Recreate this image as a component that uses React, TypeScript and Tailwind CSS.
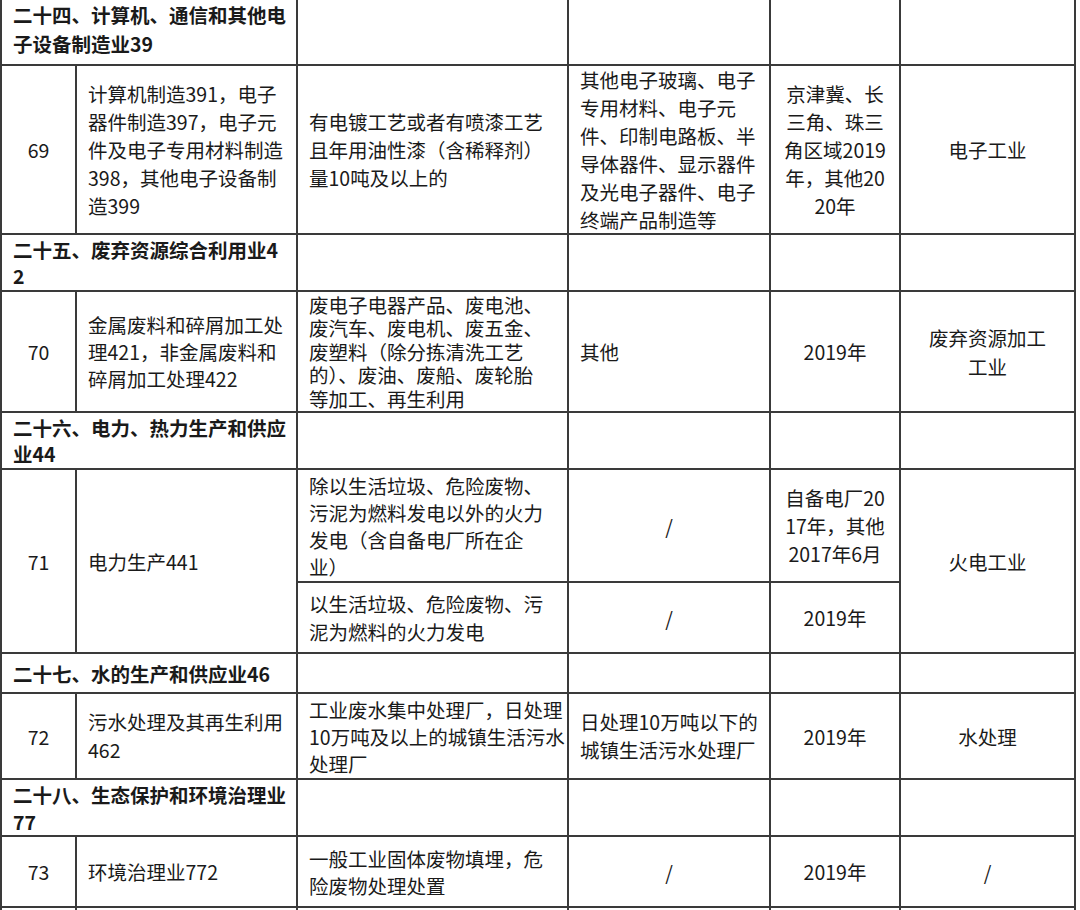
import type { ReactNode } from "react"

type CellProps = {
  lines?: ReactNode[]
  center?: boolean
  lh?: string
  bold?: boolean
  span?: string
}

function Cell({ lines = [], center, lh = "leading-[27px]", bold, span = "" }: CellProps) {
  return (
    <div
      className={`bg-white flex flex-col justify-center ${center ? "items-center text-center" : "pl-[11px]"} ${lh} ${bold ? "font-bold pl-[10px]" : ""} ${span}`}
    >
      {lines.map((l, i) => (
        <div key={i} className="whitespace-nowrap">
          {l}
        </div>
      ))}
    </div>
  )
}

function Empty() {
  return <div className="bg-white" />
}

function Section({ lines, lh }: { lines: string[]; lh: string }) {
  return (
    <>
      <Cell lines={lines} bold lh={lh} span="col-span-2" />
      <Empty />
      <Empty />
      <Empty />
      <Empty />
    </>
  )
}

export default function App() {
  return (
    <div className="bg-white min-h-screen overflow-hidden font-['Noto_Sans_CJK_SC','Noto_Sans_CJK_JP',sans-serif] text-[19.5px] text-[#1a1a1a]">
      <div className="-mt-[9px] w-[1076px] grid gap-[2px] p-[2px] bg-[#3a3a3a] grid-cols-[73px_219px_269px_200px_128px_173px] grid-rows-[71px_167px_55px_119px_55px_111px_69px_38px_84px_55px_69px_40px]">
        <Section lines={["二十四、计算机、通信和其他电", "子设备制造业39"]} lh="leading-[29px]" />

        <Cell lines={["69"]} center />
        <Cell
          lh="leading-[28px]"
          lines={["计算机制造391，电子", "器件制造397，电子元", "件及电子专用材料制造", "398，其他电子设备制", "造399"]}
        />
        <Cell lh="leading-[28px]" lines={["有电镀工艺或者有喷漆工艺", "且年用油性漆（含稀释剂）", "量10吨及以上的"]} />
        <Cell
          lh="leading-[28px]"
          lines={["其他电子玻璃、电子", "专用材料、电子元", "件、印制电路板、半", "导体器件、显示器件", "及光电子器件、电子", "终端产品制造等"]}
        />
        <Cell center lh="leading-[28px]" lines={["京津冀、长", "三角、珠三", "角区域2019", "年，其他20", "20年"]} />
        <Cell center lines={["电子工业"]} />

        <Section lines={["二十五、废弃资源综合利用业4", "2"]} lh="leading-[26px]" />

        <Cell lines={["70"]} center />
        <Cell lines={["金属废料和碎屑加工处", "理421，非金属废料和", "碎屑加工处理422"]} />
        <Cell
          lh="leading-[23.5px]"
          lines={["废电子电器产品、废电池、", "废汽车、废电机、废五金、", "废塑料（除分拣清洗工艺", "的）、废油、废船、废轮胎", "等加工、再生利用"]}
        />
        <Cell lines={["其他"]} />
        <Cell center lines={["2019年"]} />
        <Cell center lh="leading-[29px]" lines={["废弃资源加工", "工业"]} />

        <Section lines={["二十六、电力、热力生产和供应", "业44"]} lh="leading-[26px]" />

        <Cell lines={["71"]} center span="row-span-2" />
        <Cell lines={["电力生产441"]} span="row-span-2" />
        <Cell lines={["除以生活垃圾、危险废物、", "污泥为燃料发电以外的火力", "发电（含自备电厂所在企", "业）"]} />
        <Cell center lines={["/"]} />
        <Cell center lh="leading-[28px]" lines={["自备电厂20", "17年，其他", "2017年6月"]} />
        <Cell center lines={["火电工业"]} span="row-span-2" />
        <Cell lh="leading-[28px]" lines={["以生活垃圾、危险废物、污", "泥为燃料的火力发电"]} />
        <Cell center lines={["/"]} />
        <Cell center lines={["2019年"]} />

        <Section lines={["二十七、水的生产和供应业46"]} lh="leading-[27px]" />

        <Cell lines={["72"]} center />
        <Cell lh="leading-[28px]" lines={["污水处理及其再生利用", "462"]} />
        <Cell lines={["工业废水集中处理厂，日处理", "10万吨及以上的城镇生活污水", "处理厂"]} />
        <Cell lh="leading-[28px]" lines={["日处理10万吨以下的", "城镇生活污水处理厂"]} />
        <Cell center lines={["2019年"]} />
        <Cell center lines={["水处理"]} />

        <Section lines={["二十八、生态保护和环境治理业", "77"]} lh="leading-[27px]" />

        <Cell lines={["73"]} center />
        <Cell lines={["环境治理业772"]} />
        <Cell lines={["一般工业固体废物填埋，危", "险废物处理处置"]} />
        <Cell center lines={["/"]} />
        <Cell center lines={["2019年"]} />
        <Cell center lines={["/"]} />

        <Empty />
        <Empty />
        <Empty />
        <Empty />
        <Empty />
        <Empty />
      </div>
    </div>
  )
}
